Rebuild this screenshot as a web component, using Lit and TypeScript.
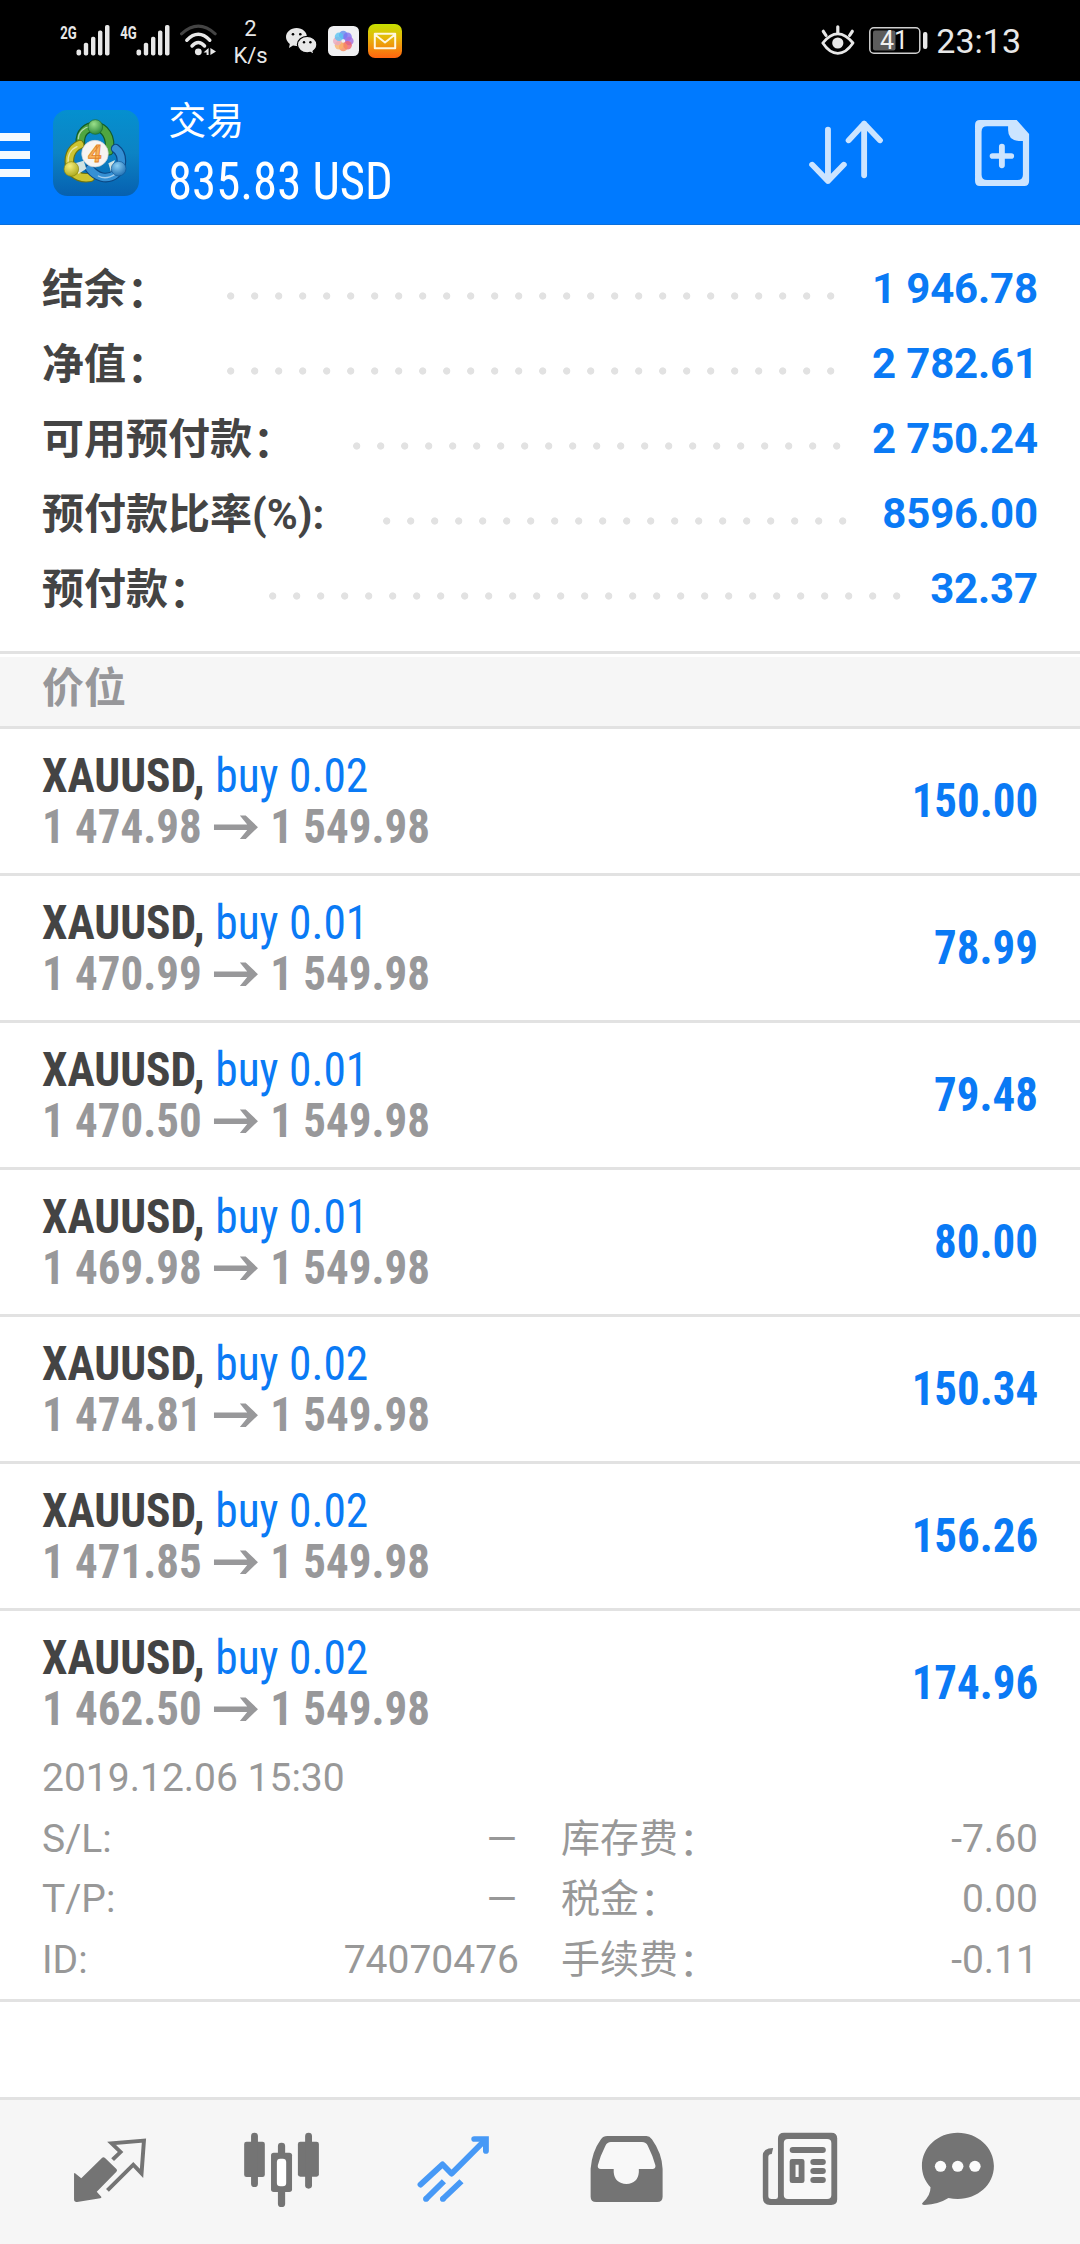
import { LitElement, html, css, svg } from "lit";
import { customElement } from "lit/decorators.js";

interface Position {
  lots: string;
  open: string;
  profit: string;
}

const CURRENT = "1 549.98";

const SUMMARY: [string, string][] = [
  ["结余：", "1 946.78"],
  ["净值：", "2 782.61"],
  ["可用预付款：", "2 750.24"],
  ["预付款比率(%):", "8596.00"],
  ["预付款：", "32.37"],
];

const POSITIONS: Position[] = [
  { lots: "0.02", open: "1 474.98", profit: "150.00" },
  { lots: "0.01", open: "1 470.99", profit: "78.99" },
  { lots: "0.01", open: "1 470.50", profit: "79.48" },
  { lots: "0.01", open: "1 469.98", profit: "80.00" },
  { lots: "0.02", open: "1 474.81", profit: "150.34" },
  { lots: "0.02", open: "1 471.85", profit: "156.26" },
  { lots: "0.02", open: "1 462.50", profit: "174.96" },
];

const DETAILS: [string, string, string, string][] = [
  ["S/L:", "—", "库存费：", "-7.60"],
  ["T/P:", "—", "税金：", "0.00"],
  ["ID:", "74070476", "手续费：", "-0.11"],
];

const caption = (text: string) =>
  text.endsWith("：") ? html`${text.slice(0, -1)}<span class="colon">：</span>` : text;

@customElement("status-bar")
class StatusBar extends LitElement {
  static styles = css`
    :host { display: flex; justify-content: space-between; height: 81px; background: #000; color: #e8e8e8; font-family: Roboto, "Liberation Sans", sans-serif; }
    .side { display: flex; align-items: flex-start; }
    .left { padding-left: 56px; }
    .right { padding-right: 59px; }
    svg { display: block; flex: none; }
    .signal { margin-top: 15px; width: 54px; height: 41px; margin-right: 6px; }
    .wifi { margin: 24px 0 0 4px; width: 37px; height: 33px; }
    .rate { width: 40px; margin: 15px 0 0 13.500px; text-align: center; font-size: 22px; line-height: 27px; }
    .wechat { margin: 28px 0 0 15.500px; width: 31px; height: 27px; }
    .photos { margin: 26px 0 0 10.500px; width: 31px; height: 30px; }
    .mail { margin: 24px 0 0 9px; width: 34px; height: 34px; }
    .eye { margin: 25px 14.500px 0 0; width: 34px; height: 30px; }
    .battery { margin: 27px 8px 0 0; width: 59px; height: 27px; }
    .time { font-size: 34px; line-height: 40px; margin-top: 21px; }
  `;

  private signal(label: string) {
    return html`<svg class="signal" viewBox="-4 -10 54 41">
      <text x="0.300" y="13.700" font-size="19" font-weight="700" fill="#e8e8e8" textLength="16.500" lengthAdjust="spacingAndGlyphs">${label}</text>
      <g fill="#e8e8e8">
        <rect x="16.500" y="24.500" width="4.600" height="6" rx="2" />
        <rect x="23.800" y="17.800" width="4.400" height="12.700" rx="1.800" />
        <rect x="31" y="11.800" width="4.400" height="18.700" rx="1.800" />
        <rect x="38" y="5.600" width="4.400" height="24.900" rx="1.800" />
        <rect x="45" y="0" width="4.500" height="30.500" rx="1.800" />
      </g>
    </svg>`;
  }

  render() {
    const petals = ["#5b8cf0", "#7d6ff0", "#a06be0", "#ef5f6d", "#f78a5a", "#fbb469", "#e9a8c0", "#59c3f2"];
    return html`
      <div class="side left">
        ${this.signal("2G")} ${this.signal("4G")}
        <svg class="wifi" viewBox="0 0 37 33" fill="none" stroke-linecap="round">
          <path d="M1.500 9.800Q18.300-5.600 35.200 9.800" stroke="#444" stroke-width="3" />
          <path d="M6.800 16.200Q18.300 4.400 29.800 16.200" stroke="#e8e8e8" stroke-width="3.400" />
          <path d="M12 22Q18.300 15 24.600 22" stroke="#e8e8e8" stroke-width="3.400" />
          <circle cx="18.300" cy="27.800" r="3.400" fill="#e8e8e8" />
          <path d="M23.500 28.500 28.600 24V31H26.600V28.500ZM30.400 24V31L36 27.500Z" fill="#e8e8e8" />
        </svg>
        <div class="rate">2<br />K/s</div>
        <svg class="wechat" viewBox="0 0 31 27">
          <path fill="#e8e8e8" d="M10.600 0C4.700 0 0 4 0 9c0 2.800 1.500 5.200 3.800 6.900L3 20l4-2.400c1.200.3 2.400.5 3.600.5C16.400 18 21 14 21 9S16.400 0 10.600 0Z" />
          <path fill="#e8e8e8" stroke="#000" stroke-width="1.200" d="M21.200 8.400c-5.400 0-9.800 3.600-9.800 8.200s4.400 8.300 9.800 8.300c1.100 0 2.200-.2 3.200-.5l3.600 2-.9-3.200c2.300-1.500 3.800-3.900 3.800-6.600 0-4.600-4.300-8.200-9.700-8.200Z" />
          <g fill="#000"><circle cx="7" cy="6.300" r="1.300" /><circle cx="14.300" cy="6.300" r="1.300" /><circle cx="18" cy="14.200" r="1.200" /><circle cx="24.400" cy="14.200" r="1.200" /></g>
        </svg>
        <svg class="photos" viewBox="0 0 31 30">
          <rect width="31" height="30" rx="5.500" fill="#f0f0f2" />
          ${petals.map((c, i) => {
            const a = (i * Math.PI) / 4 - Math.PI / 2;
            return svg`<circle cx=${15.3 + 6 * Math.cos(a)} cy=${15 + 6 * Math.sin(a)} r="4.300" fill=${c} opacity="0.78" />`;
          })}
        </svg>
        <svg class="mail" viewBox="0 0 34 34">
          <defs><linearGradient id="m" x1="0" y1="0" x2="0" y2="1"><stop offset="0" stop-color="#c5e000" /><stop offset=".4" stop-color="#e6b80a" /><stop offset="1" stop-color="#ff6410" /></linearGradient></defs>
          <rect width="34" height="34" rx="7" fill="url(#m)" />
          <path d="M6.800 9.800H27.200V24.200H6.800ZM7 10.500 17 18.500 27 10.500" fill="none" stroke="#fff8e0" stroke-width="2" stroke-linejoin="round" />
        </svg>
      </div>
      <div class="side right">
        <svg class="eye" viewBox="0 0 34 30" fill="none" stroke="#e8e8e8" stroke-linecap="round">
          <path d="M1.800 18Q9 8.800 16.800 8.800T32 18Q25 28.300 16.800 28.300T1.800 18Z" stroke-width="2.800" stroke-linejoin="round" />
          <path d="M16.800 1.800V8M2.300 6.300 5 10.500M31.300 6.300 28.600 10.500" stroke-width="3.200" />
          <circle cx="16.800" cy="18" r="5.600" fill="#e8e8e8" stroke="none" />
        </svg>
        <svg class="battery" viewBox="0 0 59 27">
          <rect x="0.800" y="0.800" width="50" height="25.400" rx="4" fill="none" stroke="#d0d0d0" stroke-width="1.500" />
          <rect x="4" y="3.500" width="22.500" height="20" rx="2" fill="#5c5c5c" />
          <rect x="54" y="5" width="4.400" height="17" rx="2" fill="#e8e8e8" />
          <text x="25" y="22" font-size="25" text-anchor="middle" fill="#f0f0f0">41</text>
        </svg>
        <div class="time">23:13</div>
      </div>
    `;
  }
}

@customElement("app-header")
class AppHeader extends LitElement {
  static styles = css`
    :host { display: flex; height: 144px; box-sizing: border-box; background: #007aff; color: #fff; border-bottom: 1px solid #0a6fdc; font-family: Roboto, "Noto Sans CJK SC", sans-serif; }
    svg { display: block; flex: none; }
    .menu { display: flex; flex-direction: column; gap: 10px; padding-top: 52px; width: 30px; }
    .bar { height: 8px; background: #f4faff; }
    .logo { width: 86px; height: 86px; margin: 29px 0 0 23.300px; }
    .title { flex: 1; margin-left: 29px; padding-top: 15px; }
    .page { font-size: 38px; line-height: 50px; }
    .total { font-family: "Roboto Condensed", Roboto, sans-serif; font-stretch: 75%; font-size: 51px; line-height: 60px; margin-top: 6px; white-space: nowrap; transform: scaleX(0.956); transform-origin: 0 0; }
    .sort { width: 76px; height: 70px; margin: 37px 90px 0 0; }
    .add { width: 56px; height: 70px; margin: 37px 50px 0 0; }
  `;
  render() {
    return html`
      <div class="menu"><div class="bar"></div><div class="bar"></div><div class="bar"></div></div>
      <svg class="logo" viewBox="40 30 258 258">
        <defs>
          <linearGradient id="bg" x1="0" y1="0" x2="0" y2="1"><stop offset="0" stop-color="#0590cf" /><stop offset=".5" stop-color="#0c83c4" /><stop offset="1" stop-color="#0660b0" /></linearGradient>
          <radialGradient id="g" cx=".4" cy=".3" r=".8"><stop offset="0" stop-color="#9be08a" /><stop offset="1" stop-color="#1d7c31" /></radialGradient>
          <radialGradient id="y" cx=".4" cy=".3" r=".8"><stop offset="0" stop-color="#f6ee7c" /><stop offset="1" stop-color="#a5a215" /></radialGradient>
          <radialGradient id="b" cx=".4" cy=".3" r=".8"><stop offset="0" stop-color="#8cd0f5" /><stop offset="1" stop-color="#1566ad" /></radialGradient>
        </defs>
        <rect x="40" y="30" width="258" height="258" rx="44" fill="url(#bg)" />
        <g fill="none" stroke-linecap="round">
          <path d="M122 130C120 96 142 80 167 80 196 82 216 112 208 152" stroke="#125c2b" stroke-width="29" />
          <path d="M122 130C120 96 142 80 167 80 196 82 216 112 208 152" stroke="#4fa640" stroke-width="22" />
          <path d="M120 134C92 146 84 176 92 204 104 230 130 236 152 232" stroke="#6d7312" stroke-width="29" />
          <path d="M120 134C92 146 84 176 92 204 104 230 130 236 152 232" stroke="#cdc431" stroke-width="22" />
          <path d="M150 206C170 232 202 242 228 222 250 202 252 164 228 146" stroke="#0b4784" stroke-width="29" />
          <path d="M150 206C170 232 202 242 228 222 250 202 252 164 228 146" stroke="#3590d4" stroke-width="22" />
          <path d="M116 116C116 94 136 82 150 80M86 190C82 168 92 148 112 140M176 228C198 240 226 230 238 208" stroke="#fff" stroke-width="4" opacity=".55" />
        </g>
        <path d="M106 190 132 182 140 206 116 222Z M206 190 226 180 214 216Z" fill="#f4f6e8" opacity=".85" />
        <circle cx="167" cy="81" r="22" fill="url(#g)" stroke="#1a6a2c" stroke-width="2" />
        <circle cx="95" cy="207" r="22" fill="url(#y)" stroke="#858410" stroke-width="2" />
        <circle cx="237" cy="206" r="22" fill="url(#b)" stroke="#0f5798" stroke-width="2" />
        <circle cx="166" cy="161" r="40" fill="#f6f4f2" stroke="#c9cfd2" stroke-width="2" />
        <text x="166" y="187" font-size="72" font-weight="700" text-anchor="middle" fill="#fbb45c" stroke="#e2832a" stroke-width="2.500" transform="translate(17 0) skewX(-6)">4</text>
      </svg>
      <div class="title"><div class="page">交易</div><div class="total">835.83 USD</div></div>
      <svg class="sort" viewBox="778 354 220.700 210" preserveAspectRatio="none" fill="none" stroke="#cce4ff" stroke-width="17" stroke-linecap="round" stroke-linejoin="round">
        <path d="M836 389V543M790 494 836 543 882 494M941 526V371M896 421 941 371 987 421" />
      </svg>
      <svg class="add" viewBox="1260 354 162.600 210" preserveAspectRatio="none" fill="#cce4ff">
        <path fill-rule="evenodd" d="M1277 360H1384L1420 402V543Q1420 558 1406 558H1277Q1263 558 1263 543V375Q1263 360 1277 360ZM1298 379Q1282 379 1282 395V524Q1282 540 1298 540H1386Q1402 540 1402 524V423H1390Q1359 420 1359 390V379Z" />
        <path d="M1341 440V496M1314 468H1368" stroke="#cce4ff" stroke-width="17" stroke-linecap="round" />
      </svg>
    `;
  }
}

@customElement("tab-bar")
class TabBar extends LitElement {
  static styles = css`
    :host { display: flex; height: 147px; box-sizing: border-box; padding: 0 24px; border-top: 3px solid #e2e2e2; background: #f6f6f6; color: #747474; }
    .tab { display: block; width: 172px; height: 144px; }
    .active { color: #4799f6; }
  `;
  private tab(x: number, body: unknown, active = false) {
    return html`<svg class="tab ${active ? "active" : ""}" viewBox="${x} 60 499.440 432" preserveAspectRatio="none" fill="currentColor" stroke="none">${body}</svg>`;
  }
  render() {
    return html`
      ${this.tab(69.7, svg`
        <path d="M218 280 236 295 296 234Q300 229 305 234L338 267Q342 271 338 275L281 335 294 350Q296 354 291 355L224 366Q215 367 215 358V281Q216 278 218 280Z" />
        <path d="M327 239 350 216 324 190 418 182 411 280 387 254 312 331" fill="none" stroke="currentColor" stroke-width="11.500" />`)}
      ${this.tab(569.14, svg`
        <rect x="709" y="185" width="60" height="106" rx="7" /><rect x="729" y="158" width="20" height="163" rx="10" />
        <rect x="865" y="185" width="61" height="105" rx="7" /><rect x="886" y="158" width="20" height="168" rx="10" />
        <rect x="807" y="188" width="21" height="40" rx="10" /><rect x="807" y="325" width="21" height="56" rx="10" />
        <rect x="787" y="218" width="61" height="118" rx="8" /><rect x="804" y="236" width="27" height="83" rx="10" fill="#fff" />`)}
      ${this.tab(1068.58, svg`<g fill="none" stroke="currentColor" stroke-width="17" stroke-linejoin="round">
        <path d="M1221 314 1285 253 1311 281 1408 181" stroke-linecap="round" />
        <path d="M1377 177H1411V213" stroke-linecap="round" stroke-linejoin="miter" />
        <path d="M1236 358 1289 304M1285 358 1340 304" />
        </g><circle cx="1237" cy="357" r="8.500" /><circle cx="1286" cy="357" r="8.500" />`, true)}
      ${this.tab(0, svg`
        <path d="M195 168H309Q318 168 325 178 354 220 356 266V350Q356 366 340 366H163Q147 366 147 350V266Q151 215 177 178 184 168 195 168Z" />
        <path d="M206 186H296Q308 186 313 197 328 228 335 256 337 267 326 267H287V277Q284 311 251 312 217 311 214 277V267H177Q166 267 168 256 175 227 190 197 195 186 206 186Z" fill="#f8f8f8" />`)}
      ${this.tab(499.44, svg`
        <path d="M709 158H846Q863 158 863 175V358Q863 375 846 375H668Q647 375 647 352V228Q647 204 677 204L673 222Q663 222 663 231V348Q663 357 672 357H684Q691 357 691 350V175Q691 158 709 158Z" />
        <rect x="708" y="177" width="138" height="180" rx="12" fill="#f8f8f8" />
        <rect x="725" y="201" width="105" height="18" rx="9" />
        <path fill-rule="evenodd" d="M732 237H761Q768 237 768 244V302Q768 309 761 309H732Q725 309 725 302V244Q725 237 732 237ZM742 254V291H751V254Z" />
        <rect x="785" y="237" width="45" height="18" rx="9" /><rect x="785" y="264" width="45" height="18" rx="9" /><rect x="785" y="291" width="45" height="18" rx="9" />`)}
      ${this.tab(998.88, svg`
        <path d="M1213 158C1271 158 1318 202 1318 258S1271 357 1213 357Q1200 357 1186 354 1157 373 1117 375 1104 374 1113 366 1134 346 1134 322C1118 304 1109 282 1109 258 1109 202 1155 158 1213 158Z" />
        <g fill="#fbfbfb"><circle cx="1163" cy="259" r="16.500" /><circle cx="1213" cy="259" r="16.500" /><circle cx="1263" cy="259" r="16.500" /></g>`)}
    `;
  }
}

@customElement("app-root")
class AppRoot extends LitElement {
  static styles = css`
    :host { display: flex; flex-direction: column; width: 1080px; height: 2244px; overflow: hidden; background: #fff; font-family: Roboto, "Noto Sans CJK SC", sans-serif; }
    .summary { padding: 26px 42px 25px; border-bottom: 3px solid #e2e2e2; }
    .line { display: flex; align-items: center; height: 75px; font-size: 42px; line-height: 75px; font-weight: 700; white-space: pre; color: #444; }
    .label { padding-top: 2px; }
    .colon { display: inline-block; transform: translate(1px, 3px); }
    .dots { flex: 1; height: 8px; margin: 15px 25px 0 58.500px; background: radial-gradient(circle at 3.700px 4px, #e2e2e2 3.200px, transparent 4px) 0 0 / 24px 8px repeat-x; }
    .amount { color: #0a7af5; }
    .line .amount { letter-spacing: -0.150px; }
    .section { margin-top: 3px; height: 69px; box-sizing: content-box; padding-left: 42px; border-bottom: 3px solid #e2e2e2; background: #f6f6f6; color: #97979a; font-size: 42px; font-weight: 700; line-height: 63px; }
    .trade { border-bottom: 3px solid #e2e2e2; }
    .row { display: flex; justify-content: space-between; align-items: center; height: 144px; padding: 0 42px; }
    .cond { font-family: "Roboto Condensed", Roboto, sans-serif; font-stretch: 75%; font-size: 48px; line-height: 51px; font-weight: 700; white-space: pre; transform: scaleX(0.947); transform-origin: 0 0; }
    .cond.amount { transform: scaleX(0.936); transform-origin: 100% 0; margin-top: -2px; }
    .symbol { color: #444; }
    .side { color: #0a7af5; font-weight: 400; }
    .cond.prices { display: flex; align-items: center; color: #98989a; transform: scaleX(0.937); }
    .arrow { width: 48px; height: 26px; margin: 1px 12.500px 0 12.500px; }
    .details { margin-top: -7px; padding: 0 42px 8px; color: #989898; font-size: 39px; line-height: 60.700px; }
    .pair { display: grid; grid-template-columns: 477px 1fr; column-gap: 42px; }
    .cell { display: flex; justify-content: space-between; }
    .dash { padding-right: 2px; }
    .spacer { flex: 1; }
  `;

  render() {
    return html`
      <status-bar></status-bar>
      <app-header></app-header>
      <div class="summary">
        ${SUMMARY.map(([k, v]) => html`<div class="line"><span class="label">${caption(k)}</span><span class="dots"></span><span class="amount">${v}</span></div>`)}
      </div>
      <div class="section">价位</div>
      ${POSITIONS.map((p, i) => html`<div class="trade">
        <div class="row">
          <div>
            <div class="cond symbol">XAUUSD, <span class="side">buy ${p.lots}</span></div>
            <div class="cond prices"><span>${p.open}</span><svg class="arrow" viewBox="0 0 46 26" preserveAspectRatio="none"><path d="M0.500 10.500H34.500L27 1.500H33L45.500 13.200 33 25H27L34.500 16H0.500Z" fill="currentColor" /></svg><span>${CURRENT}</span></div>
          </div>
          <div class="cond amount">${p.profit}</div>
        </div>
        ${i === POSITIONS.length - 1
          ? html`<div class="details">
              <div>2019.12.06 15:30</div>
              ${DETAILS.map(([a, b, c, d]) => html`<div class="pair">
                <div class="cell"><span>${a}</span><span class=${b === "—" ? "dash" : ""}>${b}</span></div>
                <div class="cell"><span>${caption(c)}</span><span>${d}</span></div>
              </div>`)}
            </div>`
          : ""}
      </div>`)}
      <div class="spacer"></div>
      <tab-bar></tab-bar>
    `;
  }
}
